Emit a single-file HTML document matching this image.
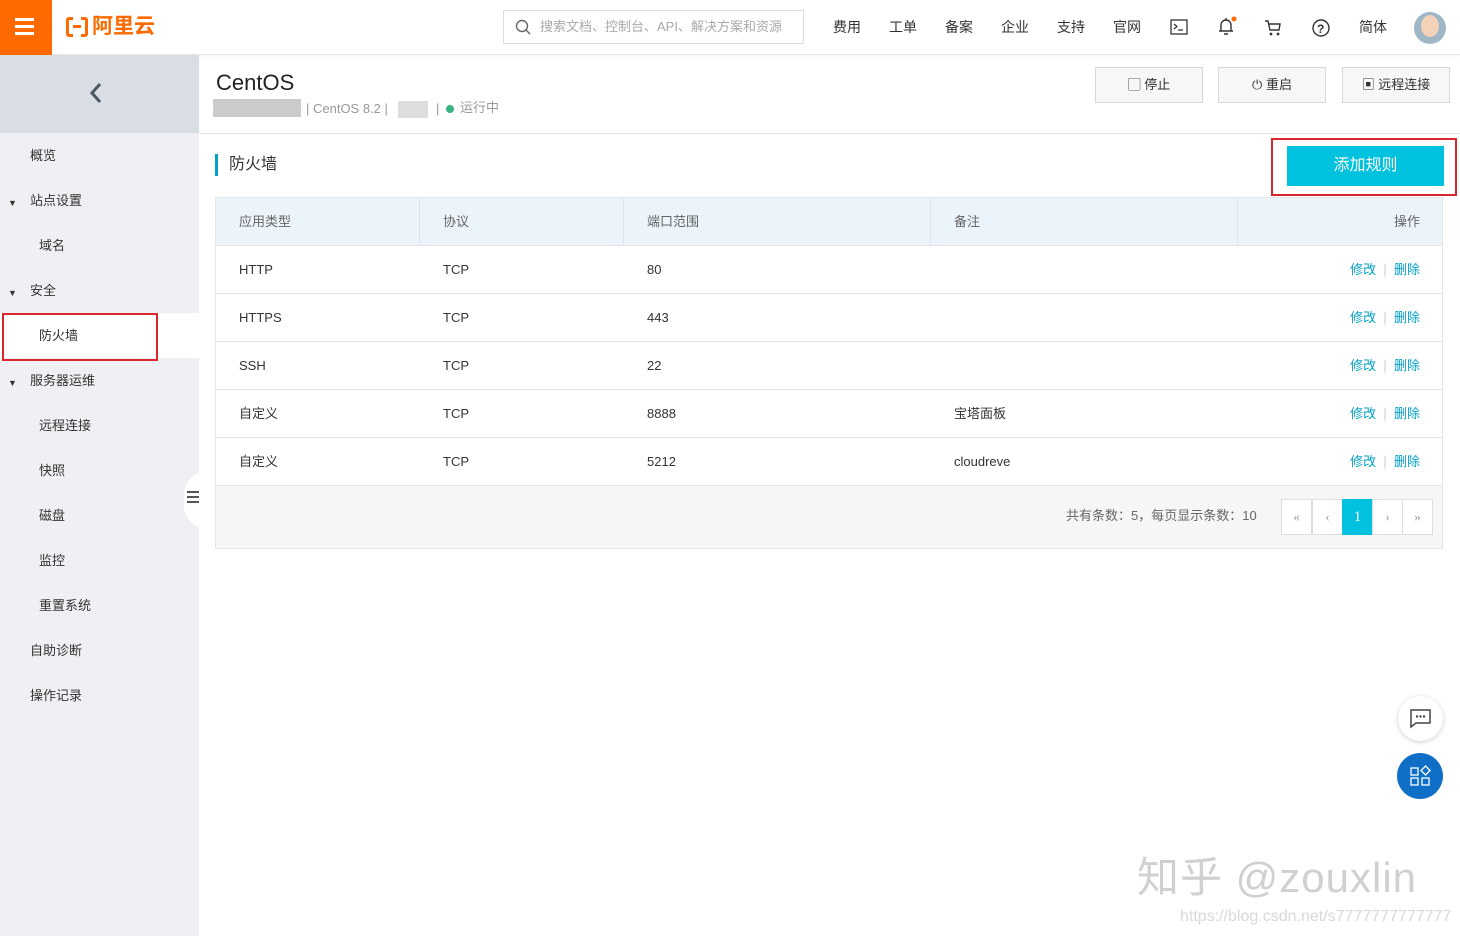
<!DOCTYPE html><html><head><meta charset="utf-8"><style>
*{margin:0;padding:0;box-sizing:border-box}
body{width:1460px;height:936px;position:relative;background:#fff;font-family:"Liberation Sans","Noto Sans CJK SC",sans-serif;font-size:13px;color:#333;overflow:hidden;line-height:16px}
.abs{position:absolute}
.top{left:0;top:0;width:1460px;height:55px;background:#fff;border-bottom:1px solid #e8e8e8;box-shadow:0 1px 3px rgba(0,0,0,.05)}
.nav span{position:absolute;top:19px;font-size:14px;color:#333}
.side{left:0;top:55px;width:199px;height:881px;background:#eef0f3}
.side div{position:absolute;font-size:13px;color:#333}
.row{position:absolute;left:216px;width:1226px;height:48px;border-bottom:1px solid #e5e5e5;font-size:13px}
.row span{position:absolute;top:16px;line-height:16px;height:16px;display:block}
.row span *{line-height:16px;vertical-align:top}
.lk{color:#00a2ca}
.btn{position:absolute;top:67px;height:36px;border:1px solid #d7d7d7;background:#f7f7f7;font-size:13px;text-align:center;line-height:34px;color:#333}
.pg{position:absolute;top:499px;width:31px;height:36px;border:1px solid #ddd;background:#fff;text-align:center;line-height:34px;color:#999;font-family:"Liberation Serif",serif}
</style></head><body>
<div class="abs top"></div>
<div class="abs" style="left:0;top:0;width:52px;height:55px;background:#ff6a00"></div>
<div class="abs" style="left:15px;top:18px;width:19px;height:3px;background:#fff;box-shadow:0 7px 0 #fff,0 14px 0 #fff"></div>
<div class="abs" style="left:66px;top:17px;width:22px;height:20px;border:3px solid #ff6a00;border-radius:3px"></div>
<div class="abs" style="left:73px;top:14px;width:8px;height:26px;background:#fff"></div>
<div class="abs" style="left:73px;top:25px;width:8px;height:3px;background:#ff6a00"></div>
<div class="abs" style="left:92px;top:13px;font-size:21px;line-height:28px;font-weight:bold;color:#ff6a00">阿里云</div>
<div class="abs" style="left:503px;top:10px;width:301px;height:34px;border:1px solid #ddd"></div>
<svg class="abs" style="left:515px;top:19px" width="16" height="16"><circle cx="7" cy="7" r="5.5" fill="none" stroke="#666" stroke-width="1.4"/><path d="M11 11l4 4" stroke="#666" stroke-width="1.4"/></svg>
<div class="abs" style="left:540px;top:19px;font-size:13px;color:#aaa">搜索文档、控制台、API、解决方案和资源</div>
<div class="nav"><span style="left:833px">费用</span><span style="left:889px">工单</span><span style="left:945px">备案</span><span style="left:1001px">企业</span><span style="left:1057px">支持</span><span style="left:1113px">官网</span><span style="left:1359px">简体</span></div>
<svg class="abs" style="left:1170px;top:19px" width="18" height="16"><rect x="1" y="1" width="16" height="14" fill="none" stroke="#333" stroke-width="1.3"/><path d="M4 5l3 2.5-3 2.5M8 11h5" stroke="#333" fill="none" stroke-width="1.2"/></svg>
<svg class="abs" style="left:1217px;top:15px" width="20" height="22"><path d="M4 16V10a5 5 0 0110 0v6zM2 16h14M7 19h4M9 3v2" stroke="#333" fill="none" stroke-width="1.4"/><circle cx="17" cy="4" r="2.5" fill="#ff6a00"/></svg>
<svg class="abs" style="left:1264px;top:18px" width="20" height="20"><path d="M1 3h3l2 9h9l1-6H5" stroke="#333" fill="none" stroke-width="1.4"/><circle cx="7" cy="16" r="1.4" fill="#333"/><circle cx="14" cy="16" r="1.4" fill="#333"/></svg>
<svg class="abs" style="left:1311px;top:18px" width="20" height="20"><circle cx="10" cy="10" r="8" fill="none" stroke="#333" stroke-width="1.4"/><text x="6" y="15" font-size="12" font-family="Liberation Sans" font-weight="bold" fill="#333">?</text></svg>
<div class="abs" style="left:1414px;top:12px;width:32px;height:32px;border-radius:50%;background:#9fb6c6"></div>
<div class="abs" style="left:1421px;top:15px;width:18px;height:22px;border-radius:50%;background:#f2d2b8"></div>

<div class="abs side"></div>
<div class="abs" style="left:0;top:55px;width:199px;height:78px;background:#d9dee4"></div>
<svg class="abs" style="left:88px;top:81px" width="16" height="24"><path d="M12 3L4 12l8 9" stroke="#4a5866" stroke-width="3" fill="none"/></svg>
<div class="side abs" style="background:none">
<div style="left:30px;top:93px">概览</div>
<div style="left:8px;top:140px;font-size:9px">▼</div><div style="left:30px;top:138px">站点设置</div>
<div style="left:39px;top:183px">域名</div>
<div style="left:8px;top:230px;font-size:9px">▼</div><div style="left:30px;top:228px">安全</div>
<div style="left:0;top:258px;width:199px;height:45px;background:#fff"></div>
<div style="left:2px;top:258px;width:156px;height:48px;border:2px solid #d9262d"></div>
<div style="left:39px;top:273px">防火墙</div>
<div style="left:8px;top:320px;font-size:9px">▼</div><div style="left:30px;top:318px">服务器运维</div>
<div style="left:39px;top:363px">远程连接</div>
<div style="left:39px;top:408px">快照</div>
<div style="left:39px;top:453px">磁盘</div>
<div style="left:39px;top:498px">监控</div>
<div style="left:39px;top:543px">重置系统</div>
<div style="left:30px;top:588px">自助诊断</div>
<div style="left:30px;top:633px">操作记录</div>
</div>
<div class="abs" style="left:184px;top:472px;width:22px;height:56px;background:#fff;border-radius:22px 0 0 22px"></div>
<div class="abs" style="left:187px;top:491px;width:12px;height:2px;background:#555;box-shadow:0 5px 0 #555,0 10px 0 #555"></div>

<div class="abs" style="left:216px;top:70px;font-size:22px;line-height:26px;color:#222">CentOS</div>
<div class="abs" style="left:213px;top:99px;width:88px;height:18px;background:#ccc"></div>
<div class="abs" style="left:306px;top:101px;font-size:13px;color:#999">| CentOS 8.2 |</div>
<div class="abs" style="left:398px;top:101px;width:30px;height:17px;background:#ddd"></div>
<div class="abs" style="left:436px;top:101px;font-size:13px;color:#999">|</div>
<div class="abs" style="left:446px;top:105px;width:8px;height:8px;border-radius:50%;background:#36b37e"></div>
<div class="abs" style="left:460px;top:100px;font-size:13px;color:#999">运行中</div>
<div class="btn" style="left:1095px;width:108px">▢ 停止</div>
<div class="btn" style="left:1218px;width:108px">⏻ 重启</div>
<div class="btn" style="left:1342px;width:108px">▣ 远程连接</div>
<div class="abs" style="left:199px;top:133px;width:1261px;height:1px;background:#e5e5e5"></div>
<div class="abs" style="left:215px;top:154px;width:3px;height:22px;background:#00a2ca"></div>
<div class="abs" style="left:229px;top:155px;font-size:16px;line-height:20px;color:#333">防火墙</div>
<div class="abs" style="left:1271px;top:138px;width:186px;height:58px;border:2px solid #d9262d"></div>
<div class="abs" style="left:1287px;top:146px;width:157px;height:40px;background:#00c1de;color:#fff;font-size:16px;text-align:center;line-height:40px">添加规则</div>

<div class="abs" style="left:215px;top:197px;width:1228px;height:352px;border:1px solid #e5e5e5"></div>
<div class="row" style="top:198px;background:#ebf4fb;color:#666"><span style="left:23px">应用类型</span><span style="left:227px">协议</span><span style="left:431px">端口范围</span><span style="left:738px">备注</span><span style="right:22px">操作</span>
<i style="position:absolute;left:203px;top:0;width:1px;height:48px;background:#dde6ee"></i><i style="position:absolute;left:407px;top:0;width:1px;height:48px;background:#dde6ee"></i><i style="position:absolute;left:714px;top:0;width:1px;height:48px;background:#dde6ee"></i><i style="position:absolute;left:1021px;top:0;width:1px;height:48px;background:#dde6ee"></i></div>
<div class="row" style="top:246px"><span style="left:23px">HTTP</span><span style="left:227px">TCP</span><span style="left:431px">80</span><span style="right:22px"><a class="lk">修改</a><b style="color:#ccc;font-weight:normal">&nbsp;&nbsp;|&nbsp;&nbsp;</b><a class="lk">删除</a></span></div>
<div class="row" style="top:294px"><span style="left:23px">HTTPS</span><span style="left:227px">TCP</span><span style="left:431px">443</span><span style="right:22px"><a class="lk">修改</a><b style="color:#ccc;font-weight:normal">&nbsp;&nbsp;|&nbsp;&nbsp;</b><a class="lk">删除</a></span></div>
<div class="row" style="top:342px"><span style="left:23px">SSH</span><span style="left:227px">TCP</span><span style="left:431px">22</span><span style="right:22px"><a class="lk">修改</a><b style="color:#ccc;font-weight:normal">&nbsp;&nbsp;|&nbsp;&nbsp;</b><a class="lk">删除</a></span></div>
<div class="row" style="top:390px"><span style="left:23px">自定义</span><span style="left:227px">TCP</span><span style="left:431px">8888</span><span style="left:738px">宝塔面板</span><span style="right:22px"><a class="lk">修改</a><b style="color:#ccc;font-weight:normal">&nbsp;&nbsp;|&nbsp;&nbsp;</b><a class="lk">删除</a></span></div>
<div class="row" style="top:438px"><span style="left:23px">自定义</span><span style="left:227px">TCP</span><span style="left:431px">5212</span><span style="left:738px">cloudreve</span><span style="right:22px"><a class="lk">修改</a><b style="color:#ccc;font-weight:normal">&nbsp;&nbsp;|&nbsp;&nbsp;</b><a class="lk">删除</a></span></div>
<div class="abs" style="left:216px;top:486px;width:1226px;height:62px;background:#f5f6f8"></div>
<div class="abs" style="left:1066px;top:508px;color:#666">共有条数：5，每页显示条数：10</div>
<div class="pg" style="left:1281px">«</div><div class="pg" style="left:1312px">‹</div><div class="pg" style="left:1342px;background:#00c1de;border-color:#00c1de;color:#fff;font-size:15px">1</div><div class="pg" style="left:1372px">›</div><div class="pg" style="left:1402px">»</div>

<div class="abs" style="left:1398px;top:696px;width:45px;height:45px;border-radius:50%;background:#fff;box-shadow:0 1px 5px rgba(0,0,0,.2)"></div>
<svg class="abs" style="left:1410px;top:709px" width="22" height="20"><path d="M1 1h19v13H6l-5 4z" fill="none" stroke="#444" stroke-width="1.5"/><circle cx="7" cy="7.5" r="1.2" fill="#444"/><circle cx="10.5" cy="7.5" r="1.2" fill="#444"/><circle cx="14" cy="7.5" r="1.2" fill="#444"/></svg>
<div class="abs" style="left:1397px;top:753px;width:46px;height:46px;border-radius:50%;background:#0f6fc6"></div>
<svg class="abs" style="left:1410px;top:765px" width="22" height="22"><rect x="1" y="3" width="7" height="7" fill="none" stroke="#fff" stroke-width="1.3"/><rect x="1" y="13" width="7" height="7" fill="none" stroke="#fff" stroke-width="1.3"/><rect x="12" y="13" width="7" height="7" fill="none" stroke="#fff" stroke-width="1.3"/><path d="M15.5 1l4.5 4.5-4.5 4.5-4.5-4.5z" fill="none" stroke="#fff" stroke-width="1.3"/></svg>
<div class="abs" style="left:1137px;top:852px;font-size:42px;line-height:52px;letter-spacing:1px;color:#d0d0d0">知乎 @zouxlin</div>
<div class="abs" style="left:1180px;top:908px;font-size:16px;line-height:18px;color:#d8d8d8">https://blog.csdn.net/s7777777777777</div>
</body></html>
